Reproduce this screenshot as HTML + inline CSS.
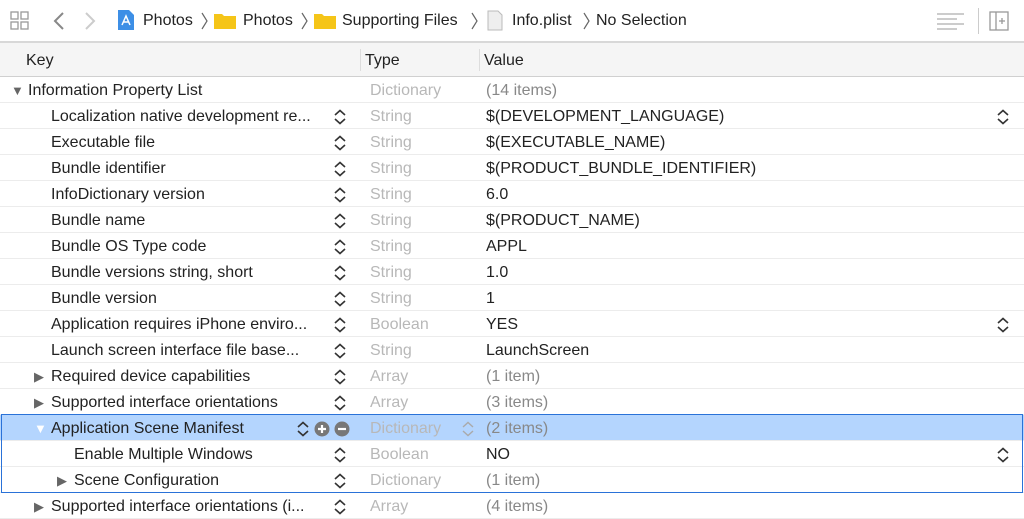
<!DOCTYPE html><html><head><style>
body{margin:0;width:1024px;height:519px;overflow:hidden;background:#fff;font-family:"Liberation Sans",sans-serif;font-size:16px;color:#222;position:relative}
.tb{position:absolute;left:0;top:0;width:1024px;height:41px;background:#fff;border-bottom:2px solid #d8d8d8}
.tb span{position:absolute;top:12px;font-size:16px}
.hd{position:absolute;left:0;top:43px;width:1024px;height:33px;background:#f5f5f5;border-bottom:1px solid #d0d0d0}
.hd span{position:absolute;top:9px}
.sep{position:absolute;top:6px;width:1px;height:22px;background:#ddd}
.r{position:absolute;left:0;width:1024px;height:26px;border-bottom:1px solid #ececec;box-sizing:border-box}
.r span{position:absolute;top:5px;white-space:nowrap}
.t{left:370px;color:#b8b8b8}
.v{left:486px}
.g{color:#888}
.st{position:absolute;left:333px;top:6px;width:14px;height:16px}
.tri{position:absolute;font-size:13px;color:#666;top:6px}
</style></head><body>
<div class="tb">
<svg style="position:absolute;left:10px;top:11px" width="20" height="20" fill="none" stroke="#999" stroke-width="1.3"><rect x="1" y="1" width="7" height="7"/><rect x="11" y="1" width="7" height="7"/><rect x="1" y="11" width="7" height="7"/><rect x="11" y="11" width="7" height="7"/></svg>
<svg style="position:absolute;left:52px;top:11px" width="50" height="20" fill="none" stroke-width="2"><path d="M11 2L3 10L11 18" stroke="#888"/><path d="M34 2L42 10L34 18" stroke="#ccc"/></svg>
<svg style="position:absolute;left:117px;top:9px" width="18" height="22"><path d="M1 1h11l5 5v15H1z" fill="#3d8fe6"/><path d="M5 16L9 7L13 16M6 13h6" stroke="#fff" stroke-width="1.5" fill="none"/></svg>
<span style="left:143px">Photos</span>
<svg style="position:absolute;left:201px;top:12px" width="8" height="18" fill="none" stroke="#666" stroke-width="1.2"><path d="M1 1L6 9L1 17"/></svg>
<svg style="position:absolute;left:214px;top:12px" width="22" height="17"><path d="M0 2h8l2 2h12v13H0z" fill="#f5c518"/></svg>
<span style="left:243px">Photos</span>
<svg style="position:absolute;left:301px;top:12px" width="8" height="18" fill="none" stroke="#666" stroke-width="1.2"><path d="M1 1L6 9L1 17"/></svg>
<svg style="position:absolute;left:314px;top:12px" width="22" height="17"><path d="M0 2h8l2 2h12v13H0z" fill="#f5c518"/></svg>
<span style="left:342px">Supporting Files</span>
<svg style="position:absolute;left:471px;top:12px" width="8" height="18" fill="none" stroke="#666" stroke-width="1.2"><path d="M1 1L6 9L1 17"/></svg>
<svg style="position:absolute;left:487px;top:10px" width="16" height="21"><path d="M1 1h10l4 4v15H1z" fill="#eee" stroke="#bbb"/></svg>
<span style="left:512px">Info.plist</span>
<svg style="position:absolute;left:583px;top:12px" width="8" height="18" fill="none" stroke="#666" stroke-width="1.2"><path d="M1 1L6 9L1 17"/></svg>
<span style="left:596px">No Selection</span>
<svg style="position:absolute;left:937px;top:12px" width="28" height="18" stroke="#999"><path d="M0 2h27M0 7h20M0 12h27M0 17h20"/></svg>
<div style="position:absolute;left:978px;top:8px;width:1px;height:26px;background:#ccc"></div>
<svg style="position:absolute;left:989px;top:11px" width="20" height="20" fill="none" stroke="#999" stroke-width="1.3"><rect x="1" y="1" width="18" height="18"/><path d="M7 1v18M10 10h6M13 7v6"/></svg>
</div>
<div class="hd"><span style="left:26px">Key</span><div class="sep" style="left:360px"></div><span style="left:365px">Type</span><div class="sep" style="left:479px"></div><span style="left:484px">Value</span></div>
<div id="rows"></div>
<div style="position:absolute;left:1px;top:414px;width:1020px;height:77px;border:1.5px solid #2a72d8"></div>
<script>
var st='<svg class="st" viewBox="0 0 14 16" fill="none" stroke="#333" stroke-width="1.6"><path d="M2 6L7 1.5L12 6M2 10L7 14.5L12 10"/></svg>';
var R=[["Information Property List","Dictionary","(14 items)",0,"d",1],
["Localization native development re...","String","$(DEVELOPMENT_LANGUAGE)",1,"",0,1],
["Executable file","String","$(EXECUTABLE_NAME)",1],
["Bundle identifier","String","$(PRODUCT_BUNDLE_IDENTIFIER)",1],
["InfoDictionary version","String","6.0",1],
["Bundle name","String","$(PRODUCT_NAME)",1],
["Bundle OS Type code","String","APPL",1],
["Bundle versions string, short","String","1.0",1],
["Bundle version","String","1",1],
["Application requires iPhone enviro...","Boolean","YES",1,"",0,1],
["Launch screen interface file base...","String","LaunchScreen",1],
["Required device capabilities","Array","(1 item)",1,"r",1],
["Supported interface orientations","Array","(3 items)",1,"r",1],
["Application Scene Manifest","Dictionary","(2 items)",1,"d",1],
["Enable Multiple Windows","Boolean","NO",2,"",0,1],
["Scene Configuration","Dictionary","(1 item)",2,"r",1],
["Supported interface orientations (i...","Array","(4 items)",1,"r",1]];
var h='';
R.forEach(function(r,i){var y=77+i*26,sel=i==13;
var kx=r[3]==0?28:(r[3]==1?51:74);
h+='<div class="r" style="top:'+y+'px;'+(sel?'background:#b4d5fe;':'')+'">';
if(r[4])h+='<span class="tri" style="top:6px;left:'+(kx-17)+'px;'+(sel?'color:#fff':'')+'">'+(r[4]=='d'?'▼':'▶')+'</span>';
h+='<span style="left:'+kx+'px">'+r[0]+'</span>';
if(i>0)h+=sel?st.replace('class="st"','class="st" style="left:296px"')+'<svg style="position:absolute;left:314px;top:6px" width="38" height="16"><circle cx="8" cy="8" r="7.5" fill="#777"/><path d="M4 8h8M8 4v8" stroke="#fff" stroke-width="2.2"/><circle cx="28" cy="8" r="7.5" fill="#777"/><path d="M24 8h8" stroke="#fff" stroke-width="2.2"/></svg>':st;
h+='<span class="t">'+r[1]+'</span>';
if(sel)h+='<svg style="position:absolute;left:461px;top:6px" width="14" height="16" fill="none" stroke="#aaa" stroke-width="1.4"><path d="M2 6L7 1.5L12 6M2 10L7 14.5L12 10"/></svg>';
h+='<span class="v'+(r[5]?' g':'')+'">'+r[2]+'</span>';
if(r[6])h+=st.replace('class="st"','class="st" style="left:996px"');
h+='</div>';});
document.getElementById('rows').innerHTML=h;
</script>
</body></html>
